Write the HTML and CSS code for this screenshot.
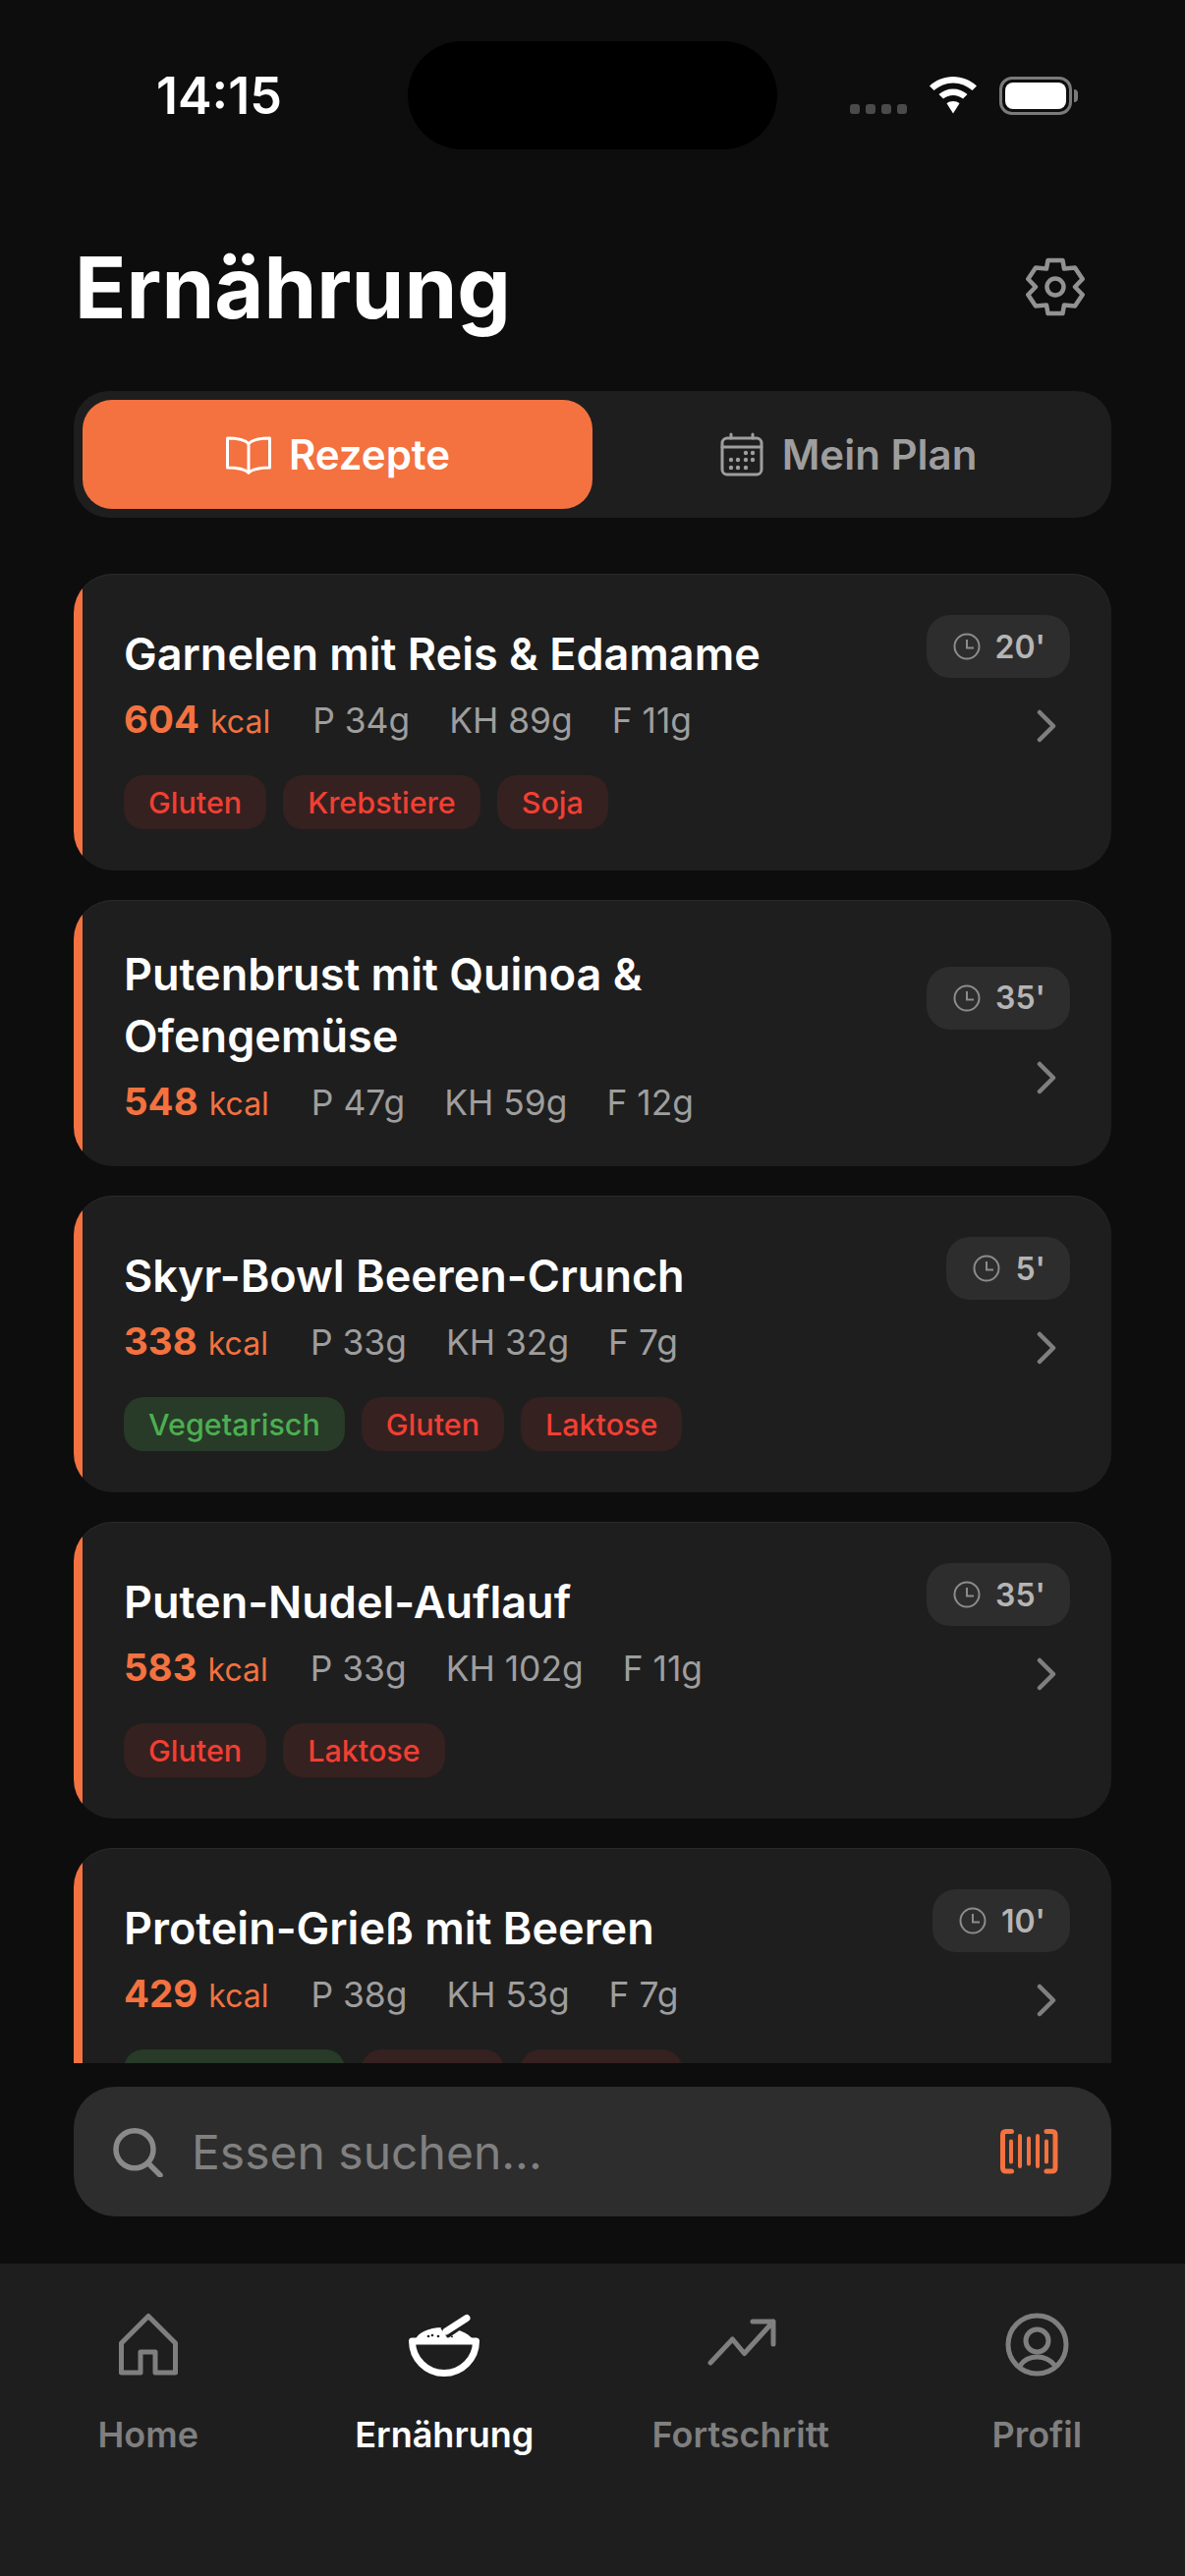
FILE: index.html
```html
<!DOCTYPE html>
<html lang="de">
<head>
  <meta charset="UTF-8">
  <title>Ernährung</title>
  <link rel="stylesheet" href="styles.css">
</head>
<body>
  <div class="phone">
    <div class="status-bar">
      <span class="time">14:15</span>
      <div class="island"></div>
      <div class="status-icons">
        <div class="signal"><i></i><i></i><i></i><i></i></div>
        <svg class="wifi" width="50" height="38" viewBox="0 0 50 38"><path d="M25 0C34 0 42.500 3.500 49 9.500L44.500 14C39 9.500 32.500 6.500 25 6.500S11 9.500 5.500 14L1 9.500C7.500 3.500 16 0 25 0Z" fill="#fff"/><path d="M25 12.500C30.500 12.500 35.500 14.500 39.500 18L35 22.500C32 20.300 28.700 19 25 19S18 20.300 15 22.500L10.500 18C14.500 14.500 19.500 12.500 25 12.500Z" fill="#fff"/><path d="M25 25C27.500 25 29.800 25.800 31.500 27.200L25 37.500L18.500 27.200C20.200 25.800 22.500 25 25 25Z" fill="#fff"/></svg>
        <div class="battery"><div class="battery-level"></div></div>
        <div class="battery-cap"></div>
      </div>
    </div>

    <div class="header">
      <h1>Ernährung</h1>
      <svg class="gear" width="60" height="60" viewBox="0 0 60 60" fill="none" stroke="#929292" stroke-width="4.500" stroke-linejoin="round"><path d="M22.500 3H37.500L39 11.500L50 10.500L57.700 22L50 30L57.700 38L50 49.500L39 48.500L37.500 57H22.500L21 48.500L10 49.500L2.300 38L10 30L2.300 22L10 10.500L21 11.500Z"/><circle cx="30" cy="30" r="8.500"/></svg>
    </div>

    <div class="tabs">
      <div class="tab active">
        <svg width="48" height="48" viewBox="0 0 48 48" fill="none" stroke="#fff" stroke-width="3" stroke-linejoin="round" stroke-linecap="round"><path d="M24 12.500C20 8.500 12 7 2.500 7V37C12 37 20 38.500 24 42C28 38.500 36 37 45.500 37V7C36 7 28 8.500 24 12.500Z"/><path d="M24 12.500V42"/></svg>
        <span>Rezepte</span>
      </div>
      <div class="tab">
        <svg width="48" height="48" viewBox="0 0 48 48" fill="none" stroke="#9e9e9e" stroke-width="3" stroke-linecap="round" stroke-linejoin="round"><rect x="4" y="7" width="40" height="37" rx="5"/><path d="M4 16H44M13 3V7M35 3V7"/><g fill="#9e9e9e" stroke="none"><circle cx="28" cy="22" r="2.200"/><circle cx="35" cy="22" r="2.200"/><circle cx="13" cy="29" r="2.200"/><circle cx="20" cy="29" r="2.200"/><circle cx="28" cy="29" r="2.200"/><circle cx="35" cy="29" r="2.200"/><circle cx="13" cy="37" r="2.200"/><circle cx="20" cy="37" r="2.200"/><circle cx="28" cy="37" r="2.200"/></g></svg>
        <span>Mein Plan</span>
      </div>
    </div>

    <div class="recipes">
      <div class="card">
        <div class="card-row">
          <div class="card-text">
            <div class="card-title">Garnelen mit Reis &amp; Edamame</div>
            <div class="macros"><span class="kcal"><b>604</b> kcal</span><span>P 34g</span><span>KH 89g</span><span>F 11g</span></div>
          </div>
          <div class="card-side">
            <div class="duration"><svg class="clock" viewBox="0 0 28 28"><circle cx="14" cy="14" r="12.500"/><path d="M14 7V15.500H21"/></svg>20'</div>
            <svg class="chevron" viewBox="0 0 20 34"><path d="M3 3L17 17L3 31"/></svg>
          </div>
        </div>
        <div class="tags"><span class="tag">Gluten</span><span class="tag">Krebstiere</span><span class="tag">Soja</span></div>
      </div>

      <div class="card">
        <div class="card-row">
          <div class="card-text">
            <div class="card-title">Putenbrust mit Quinoa &amp; Ofengemüse</div>
            <div class="macros"><span class="kcal"><b>548</b> kcal</span><span>P 47g</span><span>KH 59g</span><span>F 12g</span></div>
          </div>
          <div class="card-side">
            <div class="duration"><svg class="clock" viewBox="0 0 28 28"><circle cx="14" cy="14" r="12.500"/><path d="M14 7V15.500H21"/></svg>35'</div>
            <svg class="chevron" viewBox="0 0 20 34"><path d="M3 3L17 17L3 31"/></svg>
          </div>
        </div>
      </div>

      <div class="card">
        <div class="card-row">
          <div class="card-text">
            <div class="card-title">Skyr-Bowl Beeren-Crunch</div>
            <div class="macros"><span class="kcal"><b>338</b> kcal</span><span>P 33g</span><span>KH 32g</span><span>F 7g</span></div>
          </div>
          <div class="card-side">
            <div class="duration"><svg class="clock" viewBox="0 0 28 28"><circle cx="14" cy="14" r="12.500"/><path d="M14 7V15.500H21"/></svg>5'</div>
            <svg class="chevron" viewBox="0 0 20 34"><path d="M3 3L17 17L3 31"/></svg>
          </div>
        </div>
        <div class="tags"><span class="tag green">Vegetarisch</span><span class="tag">Gluten</span><span class="tag">Laktose</span></div>
      </div>

      <div class="card">
        <div class="card-row">
          <div class="card-text">
            <div class="card-title">Puten-Nudel-Auflauf</div>
            <div class="macros"><span class="kcal"><b>583</b> kcal</span><span>P 33g</span><span>KH 102g</span><span>F 11g</span></div>
          </div>
          <div class="card-side">
            <div class="duration"><svg class="clock" viewBox="0 0 28 28"><circle cx="14" cy="14" r="12.500"/><path d="M14 7V15.500H21"/></svg>35'</div>
            <svg class="chevron" viewBox="0 0 20 34"><path d="M3 3L17 17L3 31"/></svg>
          </div>
        </div>
        <div class="tags"><span class="tag">Gluten</span><span class="tag">Laktose</span></div>
      </div>

      <div class="card">
        <div class="card-row">
          <div class="card-text">
            <div class="card-title">Protein-Grieß mit Beeren</div>
            <div class="macros"><span class="kcal"><b>429</b> kcal</span><span>P 38g</span><span>KH 53g</span><span>F 7g</span></div>
          </div>
          <div class="card-side">
            <div class="duration"><svg class="clock" viewBox="0 0 28 28"><circle cx="14" cy="14" r="12.500"/><path d="M14 7V15.500H21"/></svg>10'</div>
            <svg class="chevron" viewBox="0 0 20 34"><path d="M3 3L17 17L3 31"/></svg>
          </div>
        </div>
        <div class="tags"><span class="tag green">Vegetarisch</span><span class="tag">Gluten</span><span class="tag">Laktose</span></div>
      </div>
    </div>

    <div class="search">
      <svg width="52" height="52" viewBox="0 0 52 52" fill="none" stroke="#8a8a8a" stroke-width="5.500" stroke-linecap="round"><circle cx="22" cy="23.750" r="19"/><path d="M36 38L48 50"/></svg>
      <span class="search-text">Essen suchen...</span>
      <svg class="barcode" width="60" height="48" viewBox="0 0 60 48" fill="none" stroke="#f37240" stroke-linecap="round"><path stroke-width="5" d="M11.500 3.500H6Q2.500 3.500 2.500 7V40.500Q2.500 44 6 44H11.500M47 3.500H52.500Q56 3.500 56 7V40.500Q56 44 52.500 44H47"/><path stroke-width="4" d="M11 13.500V34.500M20 8V39M29 10.500V36.500M38 8V39M47 13.500V34.500"/></svg>
    </div>

    <nav class="tabbar">
      <div class="nav-item">
        <svg width="72" height="72" viewBox="0 0 72 72" fill="none" stroke="#7f7f7f" stroke-width="5" stroke-linejoin="round"><path d="M36 7.500L8.500 35V65H28V44H43V65H63.500V35Z"/></svg>
        <span>Home</span>
      </div>
      <div class="nav-item active">
        <svg width="72" height="72" viewBox="0 0 72 72"><path d="M7 31C9 25 20 19 34 19C48 19 61 25 65 31Z" fill="#fff"/><path d="M36 25L59 9" stroke="#1e1e1e" stroke-width="13"/><path d="M38 23L59 9.500" stroke="#fff" stroke-width="7" stroke-linecap="round"/><g fill="#1e1e1e"><circle cx="20" cy="28" r="1.300"/><circle cx="24" cy="27" r="1.300"/><circle cx="30" cy="28" r="1.300"/><circle cx="44" cy="28.500" r="1"/></g><path d="M3.500 33H68.500A32.500 32.500 0 0 1 3.500 33Z" fill="none" stroke="#fff" stroke-width="7" stroke-linejoin="round"/></svg>
        <span>Ernährung</span>
      </div>
      <div class="nav-item">
        <svg width="72" height="72" viewBox="0 0 72 72" fill="none" stroke="#7f7f7f" stroke-width="5" stroke-linecap="round" stroke-linejoin="round"><path d="M5 55L27.500 31L39.500 45.500L69 13M48 13H69V36"/></svg>
        <span>Fortschritt</span>
      </div>
      <div class="nav-item">
        <svg width="72" height="72" viewBox="0 0 72 72" fill="none" stroke="#7f7f7f" stroke-width="5" stroke-linecap="round"><circle cx="36.500" cy="36.500" r="29.500"/><circle cx="36.500" cy="32.500" r="11.500"/><path d="M19 58C23 52 29 49 36.500 49S50 52 55 58"/></svg>
        <span>Profil</span>
      </div>
    </nav>
  </div>
</body>
</html>
```

FILE: styles.css
```css
* {
  box-sizing: border-box;
}
body {
  margin: 0;
  background: #0d0d0d;
  font-family: Inter, "Noto Sans", sans-serif;
  color: #fff;
}
.phone {
  width: 1206px;
  height: 2622px;
  display: flex;
  flex-direction: column;
  overflow: hidden;
}

/* status bar */
.status-bar {
  flex-shrink: 0;
  height: 194px;
  padding-top: 42px;
  display: flex;
  align-items: flex-start;
  position: relative;
}
.time {
  position: absolute;
  left: 159px;
  top: 69px;
  font-size: 52px;
  line-height: 58px;
  font-weight: 600;
}
.island {
  width: 376px;
  height: 110px;
  margin-left: 415px;
  background: #000;
  border-radius: 55px;
}
.status-icons {
  position: absolute;
  left: 865px;
  top: 78px;
  display: flex;
  align-items: flex-end;
}
.signal {
  display: flex;
  gap: 6px;
  margin-bottom: 1px;
}
.signal i {
  width: 10px;
  height: 10px;
  border-radius: 3px;
  background: #4a4a4a;
}
.wifi {
  margin: 0 0 1px 22px;
}
.battery {
  width: 74px;
  height: 39px;
  margin-left: 22px;
  padding: 3px;
  border: 3px solid #7a7a7a;
  border-radius: 13px;
}
.battery-level {
  height: 100%;
  border-radius: 8px;
  background: #fff;
}
.battery-cap {
  width: 4px;
  height: 13px;
  margin: 0 0 13px 2px;
  border-radius: 0 4px 4px 0;
  background: #7a7a7a;
}

/* page heading */
.header {
  flex-shrink: 0;
  height: 204px;
  padding: 47px 102px 0 76px;
  display: flex;
  justify-content: space-between;
  align-items: flex-start;
}
.header h1 {
  margin: 0;
  font-size: 86.500px;
  line-height: 103px;
  font-weight: 700;
}
.gear {
  margin-top: 21px;
}

/* Rezepte / Mein Plan switch */
.tabs {
  flex-shrink: 0;
  margin: 0 75px;
  height: 129px;
  padding: 9px;
  display: flex;
  background: #1e1e1e;
  border-radius: 36px;
}
.tab {
  flex: 1;
  display: flex;
  align-items: center;
  justify-content: center;
  gap: 17px;
  font-size: 42px;
  font-weight: 600;
  color: #9e9e9e;
  border-radius: 30px;
}
.tab.active {
  background: #f37240;
  color: #fff;
}

/* recipe list, cut off above the search field */
.recipes {
  flex-shrink: 0;
  height: 1573px;
  margin: 0 75px;
  padding-top: 57px;
  display: flex;
  flex-direction: column;
  gap: 30px;
  overflow: hidden;
}
.card {
  flex-shrink: 0;
  position: relative;
  overflow: hidden;
  padding: 42px 42px 38px 51px;
  background: #1e1e1e;
  box-shadow: inset 0 1px 0 #2a2a2a;
  border-radius: 40px;
}
/* orange strip on the left edge, trimmed by the card corners */
.card::before {
  content: "";
  position: absolute;
  left: 0;
  top: 0;
  bottom: 0;
  width: 9px;
  background: #f37240;
}
.card-row {
  display: flex;
  justify-content: space-between;
  align-items: center;
}
.card-text {
  width: 680px;
  padding-top: 3px;
}
.card-title {
  font-size: 45px;
  line-height: 62.500px;
  font-weight: 600;
}
.macros {
  height: 54px;
  display: flex;
  align-items: baseline;
  gap: 40px;
  margin-top: 9px;
  font-size: 35.400px;
  line-height: 52px;
  color: #9e9e9e;
}
.kcal {
  margin-right: 3px;
  font-size: 32px;
  color: #f37240;
}
.kcal b {
  margin-right: 2px;
  font-size: 38.500px;
  font-weight: 700;
}
.card-side {
  display: flex;
  flex-direction: column;
  align-items: flex-end;
  margin-bottom: 10px;
}
.duration {
  height: 64px;
  padding: 0 25px 0 27px;
  display: flex;
  align-items: center;
  gap: 15px;
  background: #2d2d2d;
  border-radius: 24px;
  font-size: 32px;
  font-weight: 600;
  color: #b5b5b5;
}
.clock {
  width: 28px;
  height: 28px;
  fill: none;
  stroke: #8c8c8c;
  stroke-width: 2;
}
.chevron {
  width: 20px;
  height: 34px;
  margin: 32px 14px 0 0;
  fill: none;
  stroke: #7f7f7f;
  stroke-width: 4.500;
  stroke-linecap: round;
  stroke-linejoin: round;
}
.tags {
  display: flex;
  gap: 17px;
  margin: 23px 0 4px;
}
.tag {
  height: 55px;
  padding: 0 25px;
  display: flex;
  align-items: center;
  background: #352120;
  border-radius: 20px;
  font-size: 30.500px;
  font-weight: 500;
  color: #f23f33;
}
.tag.green {
  background: #283a28;
  color: #4caf50;
}

/* search field */
.search {
  flex-shrink: 0;
  height: 132px;
  margin: 24px 75px 48px;
  padding: 0 53px 0 40px;
  display: flex;
  align-items: center;
  background: #2d2d2d;
  border-radius: 42px;
}
.search-text {
  flex: 1;
  margin-left: 28px;
  font-size: 48px;
  color: #808080;
}

/* bottom navigation */
.tabbar {
  flex: 1;
  padding-top: 46px;
  display: grid;
  grid-template-columns: repeat(4, 1fr);
  align-items: start;
  background: #1e1e1e;
}
.nav-item {
  display: flex;
  flex-direction: column;
  align-items: center;
  gap: 34px;
  font-size: 36px;
  line-height: 44px;
  font-weight: 600;
  color: #7f7f7f;
}
.nav-item.active {
  color: #fff;
}
```
